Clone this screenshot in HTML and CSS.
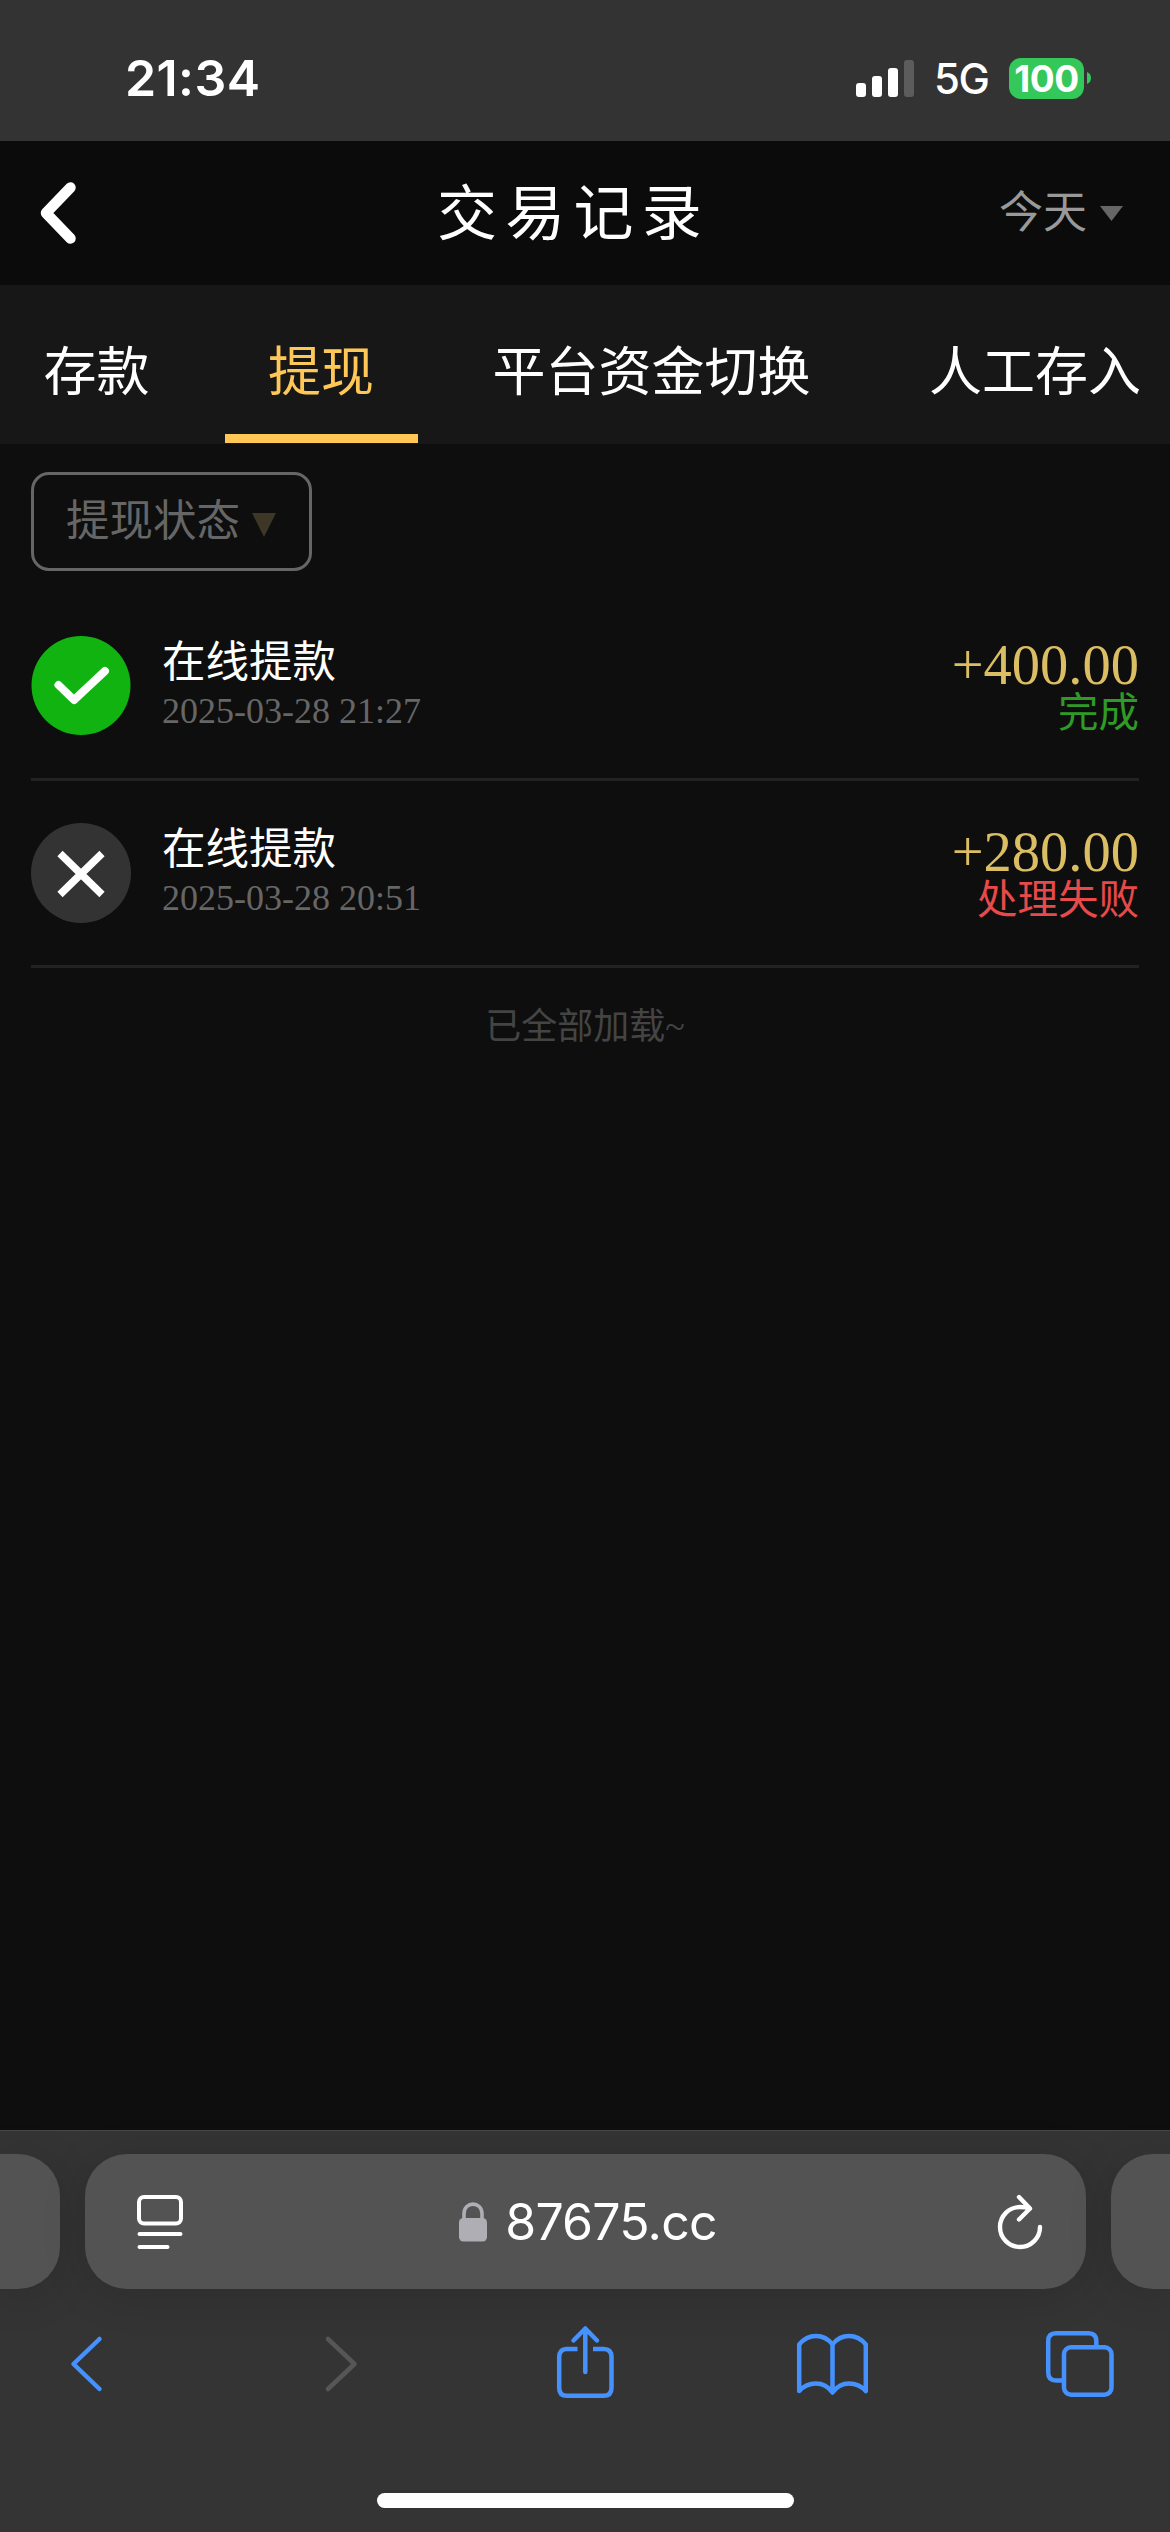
FILE: index.html
```html
<!DOCTYPE html>
<html lang="zh-CN">
<head>
<meta charset="utf-8">
<title>交易记录</title>
<link rel="stylesheet" href="styles.css">
</head>
<body>
<div class="status-bar">
  <span class="clock">21:34</span>
  <div class="indicators">
    <svg class="signal" width="58" height="37" viewBox="0 0 58 37" fill="#fff"><rect x="0" y="23" width="10" height="14" rx="3"/><rect x="16" y="16" width="10" height="21" rx="3"/><rect x="32" y="8" width="10" height="29" rx="3"/><rect x="48" y="0" width="10" height="37" rx="3" fill="#5c5c5c"/></svg>
    <span class="network">5G</span>
    <span class="battery">100</span>
    <svg class="battery-cap" width="4" height="12" viewBox="0 0 4 12"><path d="M0 0Q4 1.500 4 6T0 12Z" fill="#34c759"/></svg>
  </div>
</div>
<header class="page-header">
  <svg class="back" width="36" height="62" viewBox="0 0 36 62" fill="none" stroke="#fff" stroke-width="10.500" stroke-linecap="round" stroke-linejoin="round"><path d="M30.500 5.500L6 31L30.500 56.500"/></svg>
  <h1 class="title">交易记录</h1>
  <div class="period"><span>今天</span><svg width="23" height="15" viewBox="0 0 23 15"><path d="M0 0H23L11.500 15Z" fill="#666"/></svg></div>
</header>
<nav class="tabs">
  <a class="tab">存款</a>
  <a class="tab active">提现</a>
  <a class="tab">平台资金切换</a>
  <a class="tab">人工存入</a>
</nav>
<main class="content">
  <div class="filter"><span>提现状态</span><svg width="24" height="24" viewBox="0 0 24 24"><path d="M0 0H24L12 24Z" fill="#3e3728"/></svg></div>
  <ul class="records">
    <li class="record">
      <svg class="state-icon" width="100" height="100" viewBox="0 0 100 100" fill="none" stroke="#fff" stroke-width="8" stroke-linejoin="round"><circle cx="50" cy="49.500" r="49.500" fill="#10b310" stroke="none"/><path d="M27.500 49L43 64L74 35" stroke-linecap="round"/></svg>
      <div class="info"><span class="name">在线提款</span><span class="date">2025-03-28 21:27</span></div>
      <div class="result"><span class="amount">+400.00</span><span class="state done">完成</span></div>
    </li>
    <li class="record">
      <svg class="state-icon" width="100" height="100" viewBox="0 0 100 100" fill="none" stroke="#fff" stroke-width="7.500"><circle cx="50" cy="50" r="50" fill="#333" stroke="none"/><path d="M29 30.500L71 71.500M71 30.500L29 71.500"/></svg>
      <div class="info"><span class="name">在线提款</span><span class="date">2025-03-28 20:51</span></div>
      <div class="result"><span class="amount">+280.00</span><span class="state failed">处理失败</span></div>
    </li>
  </ul>
  <p class="end">已全部加载~</p>
</main>
<footer class="browser">
  <div class="address-row">
    <div class="side left"></div>
    <div class="address">
      <svg width="46" height="54" viewBox="0 0 46 54" fill="none" stroke="#fff" stroke-width="4" stroke-linecap="round"><rect x="2" y="2" width="42" height="26.500" rx="5"/><path d="M2.500 39H43.500M2.500 52H30.500"/></svg>
      <div class="host">
        <svg width="28" height="40" viewBox="0 0 28 40"><rect x="0" y="16" width="28" height="23.500" rx="4.500" fill="#aeaeb4"/><path d="M5 18V11.500C5 -1 23 -1 23 11.500V18" fill="none" stroke="#aeaeb4" stroke-width="3.600"/></svg>
        <span>87675.cc</span>
      </div>
      <svg width="46" height="56" viewBox="0 0 46 56" fill="none" stroke="#fff" stroke-width="4.400" stroke-linecap="round" stroke-linejoin="round"><path d="M43 33A20 20 0 1 1 23 13Q28 13 33 14.500M22 3L33 14.500L22 25.500"/></svg>
    </div>
    <div class="side right"></div>
  </div>
  <div class="toolbar">
    <svg viewBox="0 0 80 80"><path d="M53.500 17L27.500 42L53.500 67"/></svg>
    <svg class="disabled" viewBox="0 0 80 80"><path d="M34 17L60.500 42L34 67"/></svg>
    <svg viewBox="0 0 80 80"><path d="M35.500 27H25Q17.200 27 17.200 35V66Q17.200 73.800 25 73.800H61.500Q69.500 73.800 69.500 66V35Q69.500 27 61.500 27H51" stroke-linecap="butt"/><path d="M43.300 50V7M31.500 18.500L43.300 6.500L55 18.500"/></svg>
    <svg viewBox="0 0 80 80"><path d="M42.500 22.500Q36 14 26 14T9.200 22.500V69Q16 61.500 26 61.500T42.500 70.500Q49 61.500 59 61.500T75.800 69V22.500Q69 14 59 14T42.500 22.500V70"/></svg>
    <svg viewBox="0 0 80 80"><path d="M24 58.500H18Q10.200 58.500 10.200 50.500V19Q10.200 11.200 18 11.200H50.500Q58.300 11.200 58.300 19V25" stroke-linecap="butt"/><rect x="26" y="25.200" width="47.500" height="47.500" rx="7"/></svg>
  </div>
  <div class="home"></div>
</footer>
</body>
</html>
```
FILE: styles.css
```css
* { box-sizing: border-box; }
body {
  margin: 0;
  width: 1170px;
  height: 2532px;
  overflow: hidden;
  display: flex;
  flex-direction: column;
  background: #0e0e0e;
  color: #fff;
  font-family: "Liberation Serif", "Noto Sans CJK SC", serif;
}
svg { display: block; flex: none; }

.status-bar {
  height: 141px;
  flex: none;
  display: flex;
  justify-content: space-between;
  padding: 53px 79px 0 125px;
  background: #333;
  font-family: Inter, sans-serif;
}
.clock { font-size: 50px; font-weight: 600; line-height: 50px; letter-spacing: .4px; }
.indicators { display: flex; height: 50px; align-items: center; }
.network { width: 53px; margin: 2px 22px 0 20px; font-size: 42px; font-weight: 500; line-height: 50px; white-space: nowrap; letter-spacing: -1.5px; }
.battery {
  width: 75px;
  height: 41px;
  border-radius: 12px;
  background: #34c759;
  font-size: 37px;
  font-weight: 700;
  line-height: 41px;
  text-align: center;
  letter-spacing: -.5px;
}
.battery-cap { margin-left: 3px; }

.page-header {
  height: 144px;
  flex: none;
  display: grid;
  grid-template-columns: 1fr auto 1fr;
  align-items: center;
  padding: 0 47px 0 40px;
  background: #0b0b0b;
  font-family: "Noto Sans CJK SC", sans-serif;
}
.title { margin: 0 16px 8px 0; font-size: 60px; font-weight: 400; line-height: 80px; letter-spacing: 8.3px; }
.period { justify-self: end; display: flex; align-items: center; gap: 13px; color: #999; font-size: 44px; line-height: 60px; }
.period span { margin-bottom: 9px; }

.tabs {
  height: 159px;
  flex: none;
  display: flex;
  gap: 31.5px;
  background: #171717;
  font-family: "Noto Sans CJK SC", sans-serif;
}
.tab {
  flex: none;
  height: 158px;
  padding: 43px 43.5px 0;
  border-bottom: 9px solid transparent;
  font-size: 53px;
  line-height: 80px;
  white-space: nowrap;
}
.tab.active { color: #ffc856; border-color: #ffc856; }

.content { flex: 1; padding: 28px 31px 0; }
.filter {
  width: 281px;
  height: 99px;
  display: flex;
  align-items: center;
  gap: 12px;
  padding-left: 32px;
  border: 3px solid #666;
  border-radius: 18px;
  color: #666;
  font: 43.5px/60px "Noto Sans CJK SC", sans-serif;
}
.filter span { margin-bottom: 7px; }
.filter svg { margin-top: 6px; }
.records { list-style: none; margin: 23px 0 0; padding: 0; }
.record {
  height: 187px;
  display: flex;
  align-items: center;
  border-bottom: 3px solid #222;
}
.info { display: flex; flex-direction: column; margin-left: 31px; }
.name { font-size: 43.5px; line-height: 50px; }
.date { font-size: 36px; line-height: 48px; color: #666; }
.result { display: flex; flex-direction: column; align-items: flex-end; margin-left: auto; padding-top: 3px; }
.amount { font-size: 56.5px; line-height: 52px; color: #dbbd63; }
.state { font-size: 40.5px; line-height: 45px; }
.done { color: #2f9a26; }
.failed { color: #e84a4a; }
.end { margin: 35px 0 0; text-align: center; font-size: 36px; line-height: 48px; color: #444; }

.browser {
  height: 402px;
  flex: none;
  border-top: 1px solid #484848;
  background: #343434;
}
.address-row { display: flex; gap: 25px; padding-top: 23px; }
.address, .side { height: 135px; background: #535353; box-shadow: 0 6px 45px rgba(0, 0, 0, .14); }
.address {
  width: 1001px;
  display: flex;
  align-items: center;
  justify-content: space-between;
  padding: 0 42px 0 52px;
  border-radius: 42px;
}
.side { flex: 1; }
.side.left { border-radius: 0 42px 42px 0; }
.side.right { border-radius: 42px 0 0 42px; }
.host { display: flex; align-items: center; gap: 18px; margin-right: 4px; font: 50px/60px Inter, sans-serif; letter-spacing: -.8px; }
.toolbar { display: flex; justify-content: space-between; padding: 33px 52px 0 46px; }
.toolbar svg {
  width: 80px;
  height: 80px;
  fill: none;
  stroke: #4592ff;
  stroke-width: 4.5;
  stroke-linecap: round;
  stroke-linejoin: round;
}
.toolbar .disabled { stroke: #565656; }
.home { width: 417px; height: 15px; margin: 91px auto 0; border-radius: 8px; background: #fff; }
```
